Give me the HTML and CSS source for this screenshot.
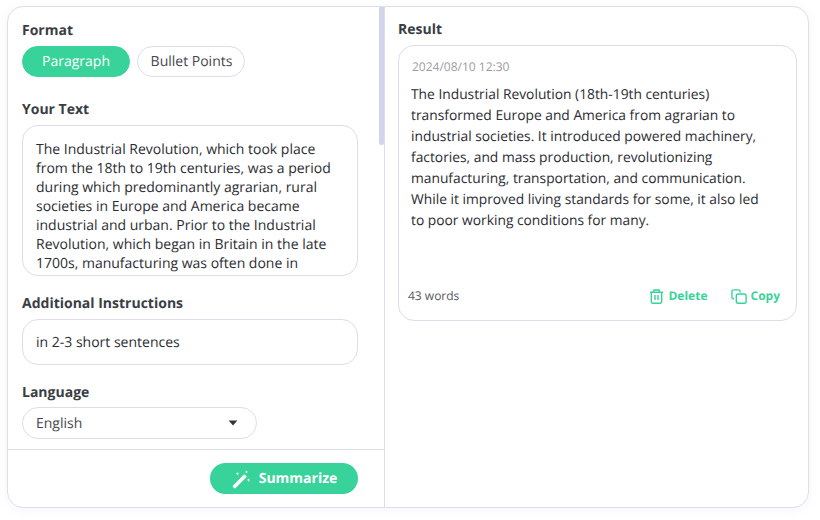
FILE: index.html
```html
<!DOCTYPE html>
<html lang="en">
<head>
<meta charset="utf-8">
<title>Summarizer</title>
<link rel="stylesheet" href="styles.css">
</head>
<body>
<main class="card">
  <section class="left">
    <div class="form">
      <div class="scrollbar"></div>
      <h3 class="label">Format</h3>
      <div class="pills">
        <button class="pill active">Paragraph</button>
        <button class="pill">Bullet Points</button>
      </div>
      <h3 class="label label-text">Your Text</h3>
      <div class="textbox">The Industrial Revolution, which took place from the 18th to 19th centuries, was a period during which predominantly agrarian, rural societies in Europe and America became industrial and urban. Prior to the Industrial Revolution, which began in Britain in the late 1700s, manufacturing was often done in</div>
      <h3 class="label label-add">Additional Instructions</h3>
      <div class="input">in 2-3 short sentences</div>
      <h3 class="label label-lang">Language</h3>
      <div class="select">
        <span>English</span>
        <svg class="caret" width="10" height="6" viewBox="0 0 10 6"><path d="M0.6 0.4h8.8L5 5.6z" fill="#33363d"/></svg>
      </div>
    </div>
    <div class="footer">
      <button class="submit">
        <svg width="20" height="20" viewBox="0 0 20 20" fill="#fff">
          <path d="M13.200 5.200l2.600 2.600L4.600 19a1.200 1.200 0 0 1-1.700 0l-.9-.9a1.200 1.200 0 0 1 0-1.700z"/>
          <path d="M15.500 1.200l.5 1.200 1.200.5-1.200.5-.5 1.200-.5-1.200-1.200-.5 1.200-.5zM6.500 2.800l.5 1.400 1.400.5-1.400.5-.5 1.400-.5-1.400-1.400-.5 1.400-.5zM17.500 9.200l.5 1.400 1.400.5-1.400.5-.5 1.400-.5-1.400-1.400-.5 1.400-.5z"/>
        </svg>
        <span>Summarize</span>
      </button>
    </div>
  </section>
  <section class="right">
    <h3 class="label">Result</h3>
    <article class="result">
      <div class="date">2024/08/10 12:30</div>
      <p class="summary">The Industrial Revolution (18th-19th centuries) transformed Europe and America from agrarian to industrial societies. It introduced powered machinery, factories, and mass production, revolutionizing manufacturing, transportation, and communication. While it improved living standards for some, it also led to poor working conditions for many.</p>
      <div class="result-foot">
        <span class="count">43 words</span>
        <div class="actions">
          <span class="action">
            <svg width="15" height="15" viewBox="0 0 15 15" fill="none" stroke="#38d39a" stroke-width="1.4" stroke-linejoin="round"><path d="M1 3.200h13M4.800 3V1h5.400v2M2.300 3.200v9.600A1.500 1.500 0 0 0 3.800 14.300h7.400a1.500 1.500 0 0 0 1.500-1.500V3.200M6 6v5M9 6v5"/></svg>
            Delete
          </span>
          <span class="action">
            <svg width="16" height="15" viewBox="0 0 16 15" fill="none" stroke="#38d39a" stroke-width="1.4"><path d="M3 9.800H2.400A1.500 1.500 0 0 1 .9 8.300V2.400A1.500 1.500 0 0 1 2.400.9h5.200a1.500 1.500 0 0 1 1.500 1.500v1.200"/><rect x="5.300" y="5" width="9.800" height="9.300" rx="1.800"/></svg>
            Copy
          </span>
        </div>
      </div>
    </article>
  </section>
</main>
</body>
</html>
```
FILE: styles.css
```css
* { box-sizing: border-box; }
html, body { margin: 0; padding: 0; background: #fff; }
body {
  font-family: "Open Sans", "Noto Sans", sans-serif;
  color: #33363d;
  width: 820px;
  height: 520px;
  overflow: hidden;
  text-rendering: geometricPrecision;
}
.card {
  margin: 6px 0 0 7px;
  width: 802px;
  height: 502px;
  border: 1px solid #dddfec;
  border-radius: 16px;
  display: flex;
  background: #fff;
  box-shadow: 0 2px 8px rgba(210, 214, 235, 0.25);
  overflow: hidden;
}
.left {
  width: 377px;
  flex: none;
  border-right: 1px solid #dcdcee;
  display: flex;
  flex-direction: column;
}
.form {
  position: relative;
  height: 443px;
  padding: 14px 26px 0 14px;
  border-bottom: 1px solid #dcdcee;
}
.scrollbar {
  position: absolute;
  top: 0;
  right: 0;
  width: 5px;
  height: 138px;
  background: #d3d6ea;
  border-radius: 0 0 2px 2px;
}
.label {
  margin: 0;
  font-size: 14px;
  line-height: 19px;
  font-weight: 700;
  color: #3a3d44;
}
.pills { display: flex; gap: 7px; margin-top: 6px; }
.pill {
  font: 400 14px/19px "Open Sans", "Noto Sans", sans-serif;
  text-rendering: geometricPrecision;
  height: 31px;
  width: 108px;
  padding: 0 0 0 1px;
  border: 1px solid #dcdcee;
  border-radius: 16px;
  background: #fff;
  color: #44474e;
}
.pill.active { background: #38d39a; border-color: #38d39a; color: #fff; padding: 0; }
.label-text { margin-top: 23px; }
.textbox {
  margin-top: 6px;
  width: 336px;
  height: 151px;
  padding: 14px 13px 0;
  border: 1px solid #dcdcee;
  border-radius: 16px;
  font-size: 14px;
  line-height: 19px;
  color: #2b2d33;
  overflow: hidden;
}
.label-add { margin-top: 18px; }
.input {
  margin-top: 6px;
  width: 336px;
  height: 46px;
  padding: 0 13px;
  border: 1px solid #dcdcee;
  border-radius: 16px;
  font-size: 14px;
  line-height: 45px;
  color: #2b2d33;
}
.label-lang { margin-top: 18px; }
.select {
  margin-top: 5px;
  width: 235px;
  height: 32px;
  padding: 0 18px 0 13px;
  border: 1px solid #dcdcee;
  border-radius: 16px;
  display: flex;
  align-items: center;
  justify-content: space-between;
  font-size: 14px;
  color: #44474e;
}
.footer {
  flex: 1;
  padding: 13px 26px 0 0;
  display: flex;
  justify-content: flex-end;
  align-items: flex-start;
}
.submit {
  width: 148px;
  height: 31px;
  padding: 0;
  border: 0;
  border-radius: 16px;
  background: #38d39a;
  color: #fff;
  font: 700 14px/19px "Open Sans", "Noto Sans", sans-serif;
  text-rendering: geometricPrecision;
  display: flex;
  align-items: center;
  justify-content: center;
  gap: 8px;
}
.right { flex: 1; padding: 13px 11px 0 13px; }
.result {
  margin-top: 6px;
  height: 276px;
  border: 1px solid #dcdcee;
  border-radius: 16px;
  padding: 13px 16px 0 13px;
  display: flex;
  flex-direction: column;
}
.date { font-size: 12px; line-height: 16px; color: #9a9ca3; }
.summary {
  margin: 9px 0 0 -1px;
  padding-right: 10px;
  font-size: 13.8px;
  line-height: 21px;
  color: #2b2d33;
}
.result-foot {
  margin-top: auto;
  margin-left: -4px;
  height: 32px;
  display: flex;
  align-items: flex-start;
  justify-content: space-between;
}
.count { font-size: 12px; line-height: 16px; color: #55585f; }
.actions { display: flex; gap: 23px; }
.action {
  display: flex;
  align-items: center;
  gap: 4px;
  font-size: 12px;
  line-height: 16px;
  font-weight: 700;
  color: #38d39a;
}
```
